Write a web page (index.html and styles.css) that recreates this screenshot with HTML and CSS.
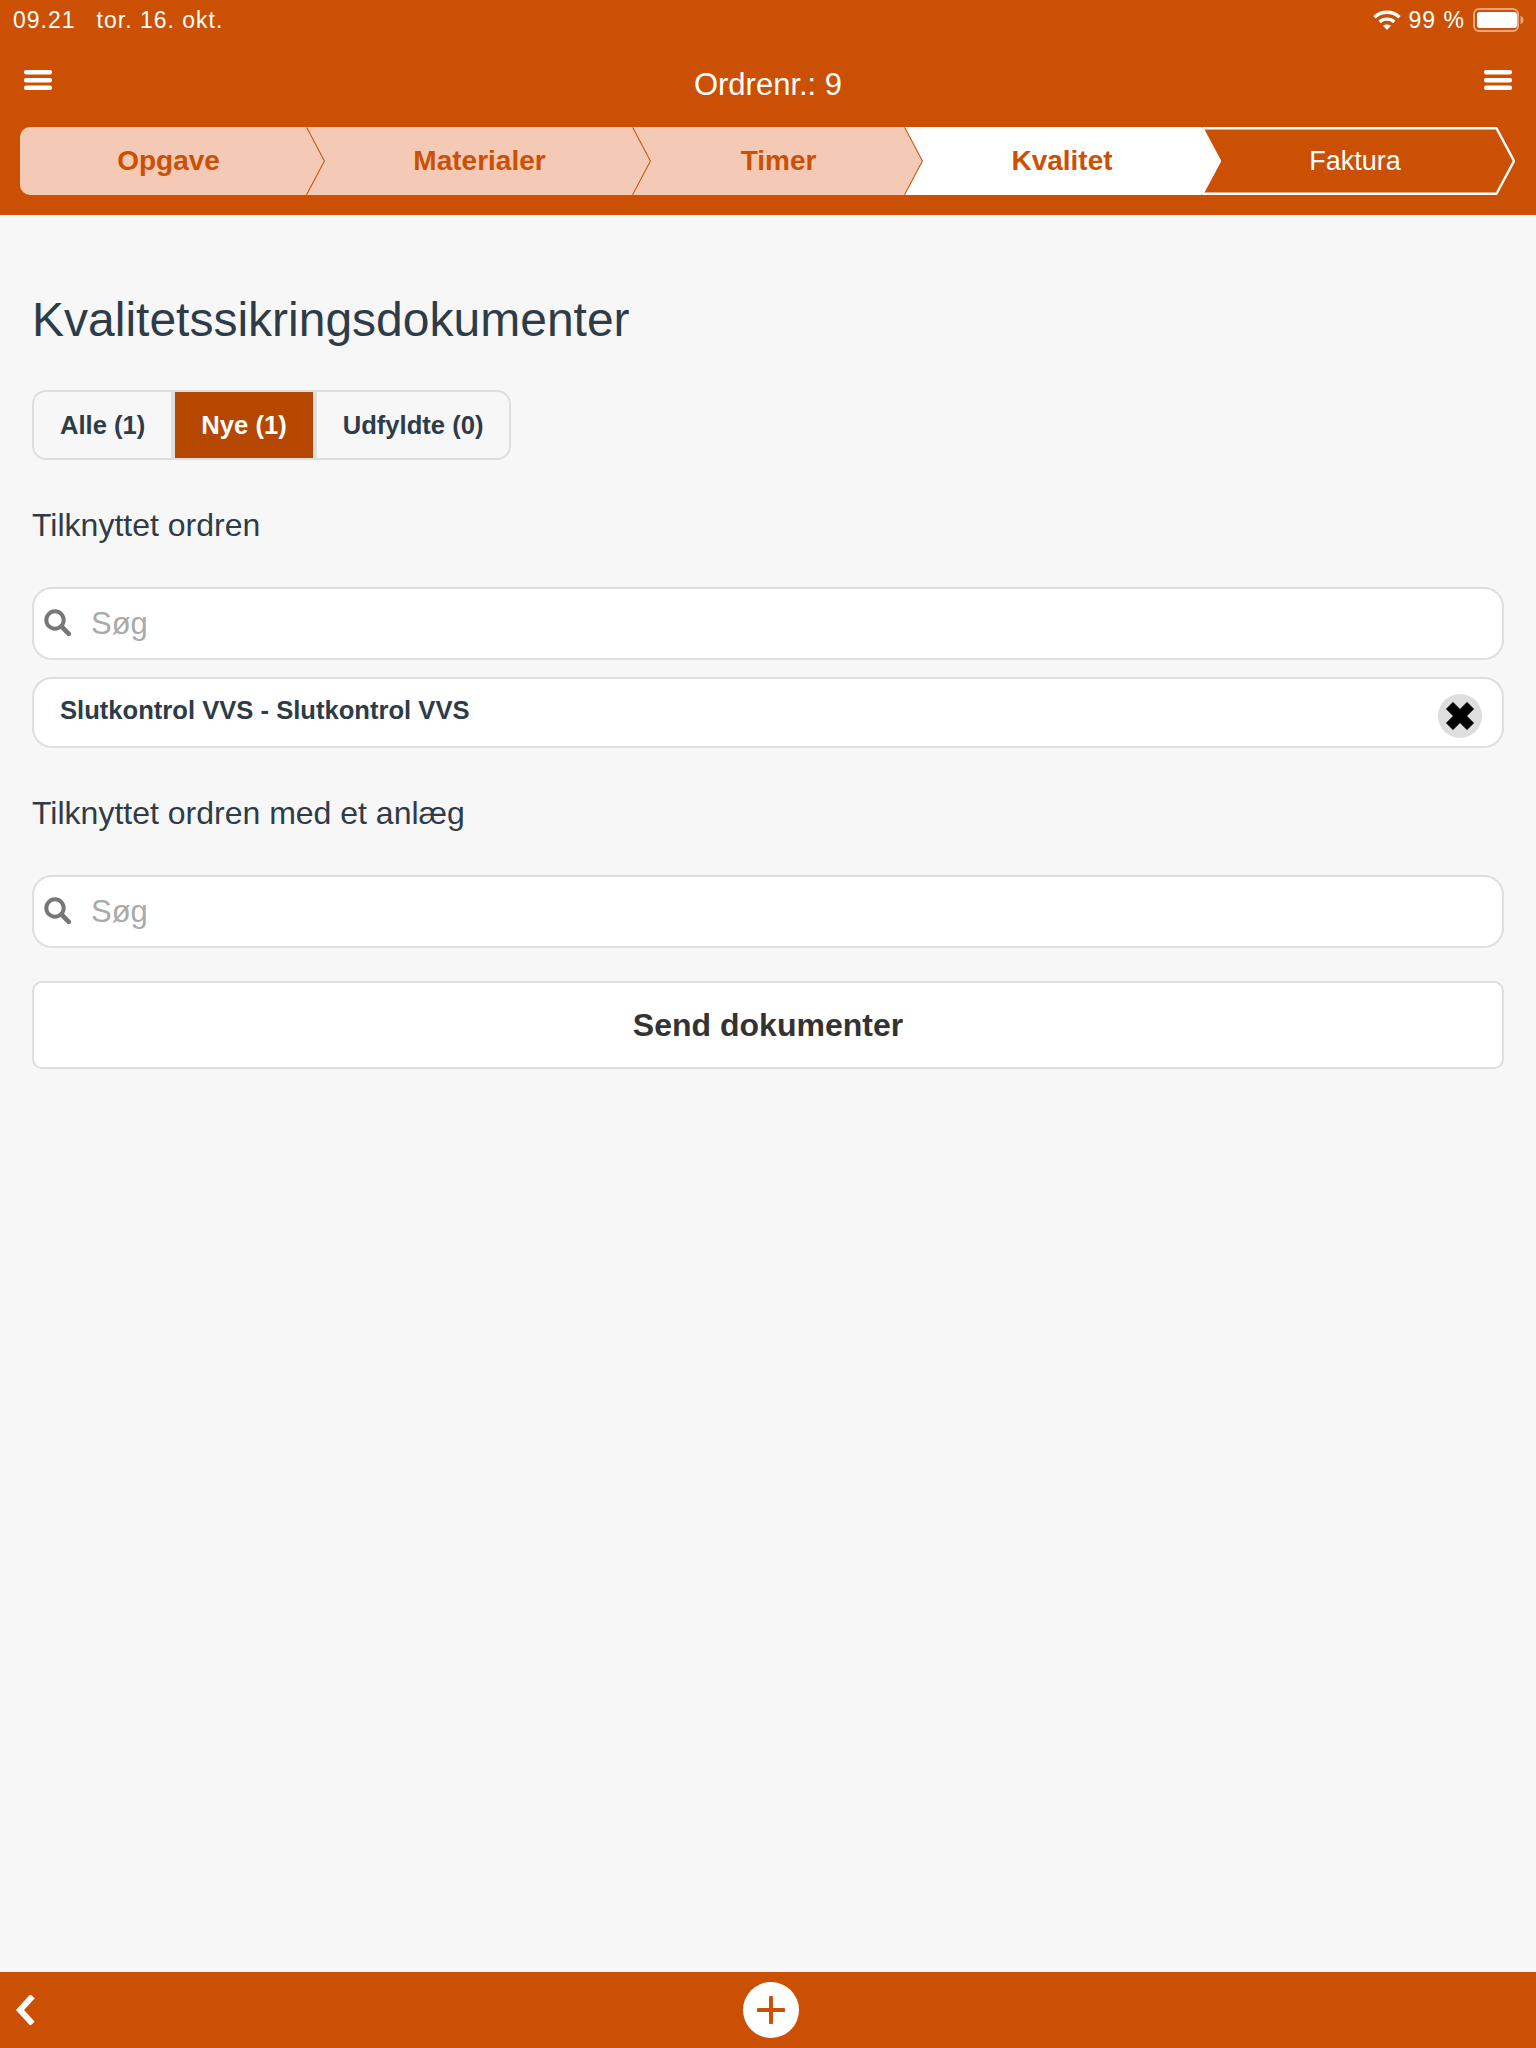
FILE: index.html
```html
<!DOCTYPE html>
<html lang="da">
<head>
<meta charset="utf-8">
<title>Kvalitetssikringsdokumenter</title>
<link rel="stylesheet" href="styles.css">
</head>
<body>
<div class="app">
  <header class="top">
    <div class="status">
      <div class="status-left"><span>09.21</span><span>tor. 16. okt.</span></div>
      <div class="status-right">
        <svg class="wifi" width="28" height="20" viewBox="0 0 28 20"><path d="M1.5 7.2C8.6 .6 19.4 .6 26.500 7.200" fill="none" stroke="#fff" stroke-width="3.400"/><path d="M6.600 11.900C10.800 8.200 17.200 8.200 21.400 11.900" fill="none" stroke="#fff" stroke-width="3.400"/><path d="M10 15.800C12.400 14 15.600 14 18 15.800L14 20Z" fill="#fff"/></svg>
        <span>99 %</span>
        <svg class="battery" width="52" height="24" viewBox="0 0 52 24"><rect x="1" y="1" width="44" height="22" rx="5" fill="none" stroke="#e9a582" stroke-width="2"/><rect x="4" y="4" width="40" height="16" rx="3" fill="#fff"/><path d="M47.500 8c2 .4 3 2 3 4s-1 3.600-3 4z" fill="#e9a582"/></svg>
      </div>
    </div>
    <div class="nav">
      <svg class="burger" width="28" height="20" viewBox="0 0 28 20"><rect width="28" height="4.500" rx="2" fill="#fff"/><rect y="8" width="28" height="4.500" rx="2" fill="#fff"/><rect y="15.500" width="28" height="4.500" rx="2" fill="#fff"/></svg>
      <div class="nav-title">Ordrenr.: 9</div>
      <svg class="burger" width="28" height="20" viewBox="0 0 28 20"><rect width="28" height="4.500" rx="2" fill="#fff"/><rect y="8" width="28" height="4.500" rx="2" fill="#fff"/><rect y="15.500" width="28" height="4.500" rx="2" fill="#fff"/></svg>
    </div>
    <nav class="steps">
      <div class="step step-1 done">
        <svg class="step-bg" width="306" height="68" viewBox="0 0 306 68"><path d="M10 0H287L305 34 287 68H10A10 10 0 0 1 0 58V10A10 10 0 0 1 10 0Z" fill="#f4c9b5"/><path d="M287 0L305 34 287 68" fill="none" stroke="#cc5003" stroke-width="2" stroke-linejoin="round"/></svg>
        <span class="step-label">Opgave</span>
      </div>
      <div class="step step-2 done">
        <svg class="step-bg" width="345" height="68" viewBox="0 0 345 68"><path d="M0 0H326L344 34 326 68H0L18 34Z" fill="#f4c9b5"/><path d="M326 0L344 34 326 68" fill="none" stroke="#cc5003" stroke-width="2" stroke-linejoin="round"/></svg>
        <span class="step-label">Materialer</span>
      </div>
      <div class="step step-3 done">
        <svg class="step-bg" width="291" height="68" viewBox="0 0 291 68"><path d="M0 0H272L290 34 272 68H0L18 34Z" fill="#f4c9b5"/><path d="M272 0L290 34 272 68" fill="none" stroke="#cc5003" stroke-width="2" stroke-linejoin="round"/></svg>
        <span class="step-label">Timer</span>
      </div>
      <div class="step step-4 current">
        <svg class="step-bg" width="314" height="68" viewBox="0 0 314 68"><path d="M0 0H296L314 34 296 68H0L18 34Z" fill="#fff"/></svg>
        <span class="step-label">Kvalitet</span>
      </div>
      <div class="step step-5 next">
        <svg class="step-bg" width="314" height="68" viewBox="0 0 314 68"><path d="M1.500 1.200H295.500L313 34 295.500 66.800H1.500L19 34Z" fill="#cc5003" stroke="#fff" stroke-width="2.400" stroke-linejoin="round"/></svg>
        <span class="step-label">Faktura</span>
      </div>
    </nav>
  </header>

  <main class="content">
    <h1 class="page-title">Kvalitetssikringsdokumenter</h1>
    <div class="tabs">
      <div class="tab">Alle (1)</div>
      <div class="tab active">Nye (1)</div>
      <div class="tab">Udfyldte (0)</div>
    </div>

    <h2 class="section-label">Tilknyttet ordren</h2>
    <div class="search">
      <svg class="search-icon" width="27" height="27" viewBox="0 0 27 27"><circle cx="11" cy="11" r="8.700" fill="none" stroke="#777" stroke-width="4"/><path d="M17.500 17.500L24.800 24.800" stroke="#777" stroke-width="4.600" stroke-linecap="round"/></svg>
      <span class="search-text">Søg</span>
    </div>
    <div class="doc-row">
      <span class="doc-name">Slutkontrol VVS - Slutkontrol VVS</span>
      <span class="doc-remove"><svg width="28" height="28" viewBox="0 0 28 28"><path d="M7 0.500L14 7.500 21 .5 27.500 7 20.500 14 27.500 21 21 27.500 14 20.500 7 27.500 .5 21 7.500 14 .5 7Z" fill="#000" stroke="#000" stroke-width="1" stroke-linejoin="round"/></svg></span>
    </div>

    <h2 class="section-label second">Tilknyttet ordren med et anlæg</h2>
    <div class="search">
      <svg class="search-icon" width="27" height="27" viewBox="0 0 27 27"><circle cx="11" cy="11" r="8.700" fill="none" stroke="#777" stroke-width="4"/><path d="M17.500 17.500L24.800 24.800" stroke="#777" stroke-width="4.600" stroke-linecap="round"/></svg>
      <span class="search-text">Søg</span>
    </div>

    <button class="send" type="button">Send dokumenter</button>
  </main>

  <footer class="bottom">
    <svg class="back" width="20" height="30" viewBox="0 0 20 30"><path d="M15.500 3.500L5 15 15.500 26.500" fill="none" stroke="#fff" stroke-width="6" stroke-linecap="square" stroke-linejoin="miter"/></svg>
    <div class="add"><svg width="28" height="28" viewBox="0 0 28 28"><path d="M14 1.500V26.500M1.500 14H26.500" stroke="#cc5003" stroke-width="4" stroke-linecap="round"/></svg></div>
  </footer>
</div>
</body>
</html>
```
FILE: styles.css
```css
* { box-sizing: border-box; }
html, body { margin: 0; padding: 0; }
body {
  background: #f7f7f7;
  font-family: "Liberation Sans", Arial, sans-serif;
  color: #2d3c48;
}
.app {
  width: 1536px;
  height: 2048px;
  display: flex;
  flex-direction: column;
}
.top {
  background: #cc5003;
  height: 215px;
  color: #fff;
  flex: none;
}
.status {
  height: 40px;
  padding: 0 11px 0 13px;
  display: flex;
  justify-content: space-between;
  align-items: center;
  font-size: 23px;
  letter-spacing: 1px;
}
.status-left { display: flex; gap: 21px; }
.status-right { display: flex; align-items: center; gap: 8px; }
.wifi { display: block; }
.battery { display: block; }
.nav {
  height: 87px;
  padding: 30px 24px 0;
  display: flex;
  justify-content: space-between;
  align-items: flex-start;
}
.burger { display: block; flex: none; }
.nav-title {
  font-size: 31px;
  line-height: 30px;
  margin-top: 0;
}
.steps {
  display: flex;
  height: 68px;
  padding-left: 20px;
}
.step {
  position: relative;
  height: 68px;
  flex: none;
  display: flex;
  align-items: center;
  justify-content: center;
  font-size: 28px;
  font-weight: 700;
  color: #cc5003;
  margin-left: -19px;
}
.step-bg { position: absolute; left: 0; top: 0; display: block; }
.step-label { position: relative; }
.step-1 { width: 306px; margin-left: 0; padding-right: 9px; }
.step-2 { width: 345px; }
.step-3 { width: 291px; }
.step-4 { width: 314px; }
.step-5 { width: 314px; margin-left: -18px; padding-right: 6px; font-weight: 400; font-size: 27px; color: #fff; }

.content {
  flex: 1;
  padding: 0 32px;
}
.page-title {
  margin: 75px 0 40px;
  font-size: 48px;
  line-height: 60px;
  font-weight: 400;
}
.tabs {
  display: inline-flex;
  height: 70px;
  border: 2px solid #dedede;
  border-radius: 14px;
  overflow: hidden;
  vertical-align: top;
  gap: 4px;
  background: #dedede;
}
.tab {
  background: #f7f7f7;
  display: flex;
  align-items: center;
  padding: 0 26px 0 26px;
  font-size: 25.6px;
  font-weight: 700;
}
.tab.active { background: #b54701; color: #fff; }
.section-label {
  margin: 45px 0 42px;
  font-size: 32px;
  line-height: 40px;
  font-weight: 400;
}
.section-label.second { margin-top: 45px; }
.search {
  height: 73px;
  background: #fff;
  border: 2px solid #dedede;
  border-radius: 20px;
  display: flex;
  align-items: center;
  padding-left: 10px;
  gap: 20px;
}
.search-icon { display: block; flex: none; margin-top: -2px; }
.search-text { font-size: 31px; color: #aaa; }
.doc-row {
  margin-top: 17px;
  height: 71px;
  background: #fff;
  border: 2px solid #dedede;
  border-radius: 20px;
  display: flex;
  align-items: center;
  justify-content: space-between;
  padding: 0 20px 0 26px;
}
.doc-name { font-size: 25.6px; font-weight: 700; margin-top: -4px; }
.doc-remove {
  width: 44px;
  height: 44px;
  border-radius: 50%;
  background: #dedede;
  display: flex;
  align-items: center;
  justify-content: center;
  margin-top: 6px;
}
.doc-remove svg { display: block; }
.send {
  display: block;
  width: 100%;
  height: 88px;
  margin-top: 33px;
  background: #fff;
  border: 2px solid #dedede;
  border-radius: 10px;
  font-family: inherit;
  font-size: 32px;
  font-weight: 700;
  color: #333;
  padding: 0;
}
.bottom {
  position: relative;
  height: 76px;
  background: #cc5003;
  flex: none;
  display: flex;
  align-items: center;
  justify-content: center;
}
.back { position: absolute; left: 15px; top: 23px; display: block; }
.add {
  width: 56px;
  height: 56px;
  border-radius: 50%;
  background: #fff;
  display: flex;
  align-items: center;
  justify-content: center;
  margin-left: 6px;
}
.add svg { display: block; }
```
